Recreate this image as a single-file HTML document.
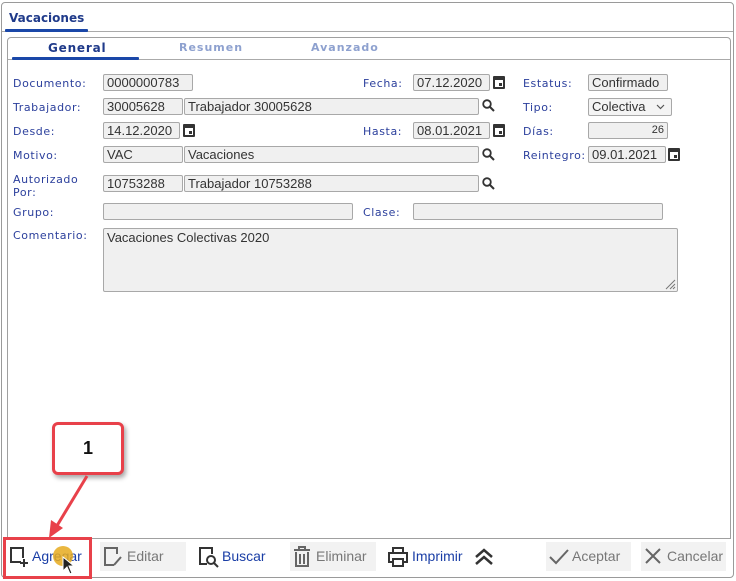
<!DOCTYPE html>
<html><head><meta charset="utf-8"><style>
*{box-sizing:border-box;margin:0;padding:0}
body{width:736px;height:581px;background:#fff;position:relative;overflow:hidden;font-family:"DejaVu Sans","Liberation Sans",sans-serif}
.a{position:absolute}
.lbl{position:absolute;font-size:11px;color:#2b3f9c;letter-spacing:.6px;line-height:13px}
.inp{position:absolute;height:17px;background:#f0f0f0;border:1px solid #a8a8a8;border-radius:2px;font-size:13px;color:#333;line-height:15px;padding-left:3px;white-space:nowrap;overflow:hidden;font-family:"Liberation Sans","DejaVu Sans",sans-serif}
.cal{position:absolute;width:12px;height:13px;border:2px solid #333;border-top-width:4px;border-radius:1px}
.cal:after{content:"";position:absolute;right:1px;bottom:1px;width:3px;height:3px;background:#333}
.btn{position:absolute;top:542px;height:29px;font-size:14px;line-height:29px;font-family:"Liberation Sans","DejaVu Sans",sans-serif}
.gray{background:#f2f2f2;color:#777}
.blue{color:#1a3ea6}
</style></head><body>
<div class="a" style="left:1px;top:2px;width:733px;height:576px;border:1px solid #9a9a9a;border-radius:4px"></div>
<div class="a" style="left:9px;top:11px;font-size:12px;font-weight:bold;color:#1f3a8a">Vacaciones</div>
<div class="a" style="left:2px;top:31px;width:731px;height:1px;background:#aaa"></div>
<div class="a" style="left:5px;top:29px;width:83px;height:3px;background:#1a47a8;border-radius:1px"></div>
<div class="a" style="left:7px;top:37px;width:724px;height:502px;border:1px solid #a0a0a0;border-radius:4px 4px 0 0"></div>
<div class="a" style="left:8px;top:59px;width:722px;height:1px;background:#aaa"></div>
<div class="a" style="left:12px;top:57px;width:127px;height:3px;background:#1a47a8;border-radius:1px"></div>
<div class="a" style="left:48px;top:41px;font-size:12px;font-weight:bold;color:#1f3a8a;letter-spacing:.8px">General</div>
<div class="a" style="left:179px;top:41px;font-size:11px;font-weight:bold;color:#8ea1cf;letter-spacing:1px">Resumen</div>
<div class="a" style="left:311px;top:41px;font-size:11px;font-weight:bold;color:#8ea1cf;letter-spacing:1px">Avanzado</div>

<div class="lbl" style="left:13px;top:77px">Documento:</div>
<div class="inp" style="left:103px;top:74px;width:90px">0000000783</div>
<div class="lbl" style="left:363px;top:77px">Fecha:</div>
<div class="inp" style="left:413px;top:74px;width:77px">07.12.2020</div><div class="cal" style="left:493px;top:76px"></div>
<div class="lbl" style="left:523px;top:77px">Estatus:</div>
<div class="inp" style="left:588px;top:74px;width:80px">Confirmado</div>

<div class="lbl" style="left:13px;top:101px">Trabajador:</div>
<div class="inp" style="left:103px;top:98px;width:80px">30005628</div>
<div class="inp" style="left:184px;top:98px;width:295px">Trabajador 30005628</div>
<svg class="a" style="left:482px;top:99px" width="13" height="13"><circle cx="5" cy="5" r="3.8" fill="none" stroke="#333" stroke-width="1.8"/><line x1="8" y1="8" x2="12" y2="12" stroke="#333" stroke-width="2"/></svg>
<div class="lbl" style="left:523px;top:101px">Tipo:</div>
<div class="inp" style="left:588px;top:98px;width:84px;height:18px;background:#f4f4f4">Colectiva</div>
<svg class="a" style="left:656px;top:104px" width="9" height="6"><path d="M1 1L4.5 4.5L8 1" fill="none" stroke="#555" stroke-width="1.2"/></svg>

<div class="lbl" style="left:13px;top:125px">Desde:</div>
<div class="inp" style="left:103px;top:122px;width:77px">14.12.2020</div><div class="cal" style="left:183px;top:124px"></div>
<div class="lbl" style="left:363px;top:125px">Hasta:</div>
<div class="inp" style="left:413px;top:122px;width:77px">08.01.2021</div><div class="cal" style="left:493px;top:124px"></div>
<div class="lbl" style="left:523px;top:125px">Días:</div>
<div class="inp" style="left:588px;top:122px;width:80px;text-align:right;padding-right:3px;font-size:11px">26</div>

<div class="lbl" style="left:13px;top:149px">Motivo:</div>
<div class="inp" style="left:103px;top:146px;width:80px">VAC</div>
<div class="inp" style="left:184px;top:146px;width:295px">Vacaciones</div>
<svg class="a" style="left:482px;top:148px" width="13" height="13"><circle cx="5" cy="5" r="3.8" fill="none" stroke="#333" stroke-width="1.8"/><line x1="8" y1="8" x2="12" y2="12" stroke="#333" stroke-width="2"/></svg>
<div class="lbl" style="left:523px;top:149px">Reintegro:</div>
<div class="inp" style="left:588px;top:146px;width:78px">09.01.2021</div><div class="cal" style="left:668px;top:148px"></div>

<div class="lbl" style="left:13px;top:173px">Autorizado<br>Por:</div>
<div class="inp" style="left:103px;top:175px;width:80px">10753288</div>
<div class="inp" style="left:184px;top:175px;width:295px">Trabajador 10753288</div>
<svg class="a" style="left:482px;top:177px" width="13" height="13"><circle cx="5" cy="5" r="3.8" fill="none" stroke="#333" stroke-width="1.8"/><line x1="8" y1="8" x2="12" y2="12" stroke="#333" stroke-width="2"/></svg>

<div class="lbl" style="left:13px;top:206px">Grupo:</div>
<div class="inp" style="left:103px;top:203px;width:250px"></div>
<div class="lbl" style="left:363px;top:206px">Clase:</div>
<div class="inp" style="left:413px;top:203px;width:250px"></div>

<div class="lbl" style="left:13px;top:229px">Comentario:</div>
<div class="inp" style="left:103px;top:228px;width:575px;height:64px;padding-top:1px">Vacaciones Colectivas 2020</div>
<svg class="a" style="left:664px;top:278px" width="12" height="12"><path d="M2 11L11 2M6 11L11 6M9 11L11 9" stroke="#777" stroke-width="1"/></svg>

<svg class="a" style="left:9px;top:546px" width="20" height="22"><path d="M12 16H2V2H14V12" fill="none" stroke="#333" stroke-width="2"/><path d="M15 13V21M11 17H19" stroke="#333" stroke-width="2"/></svg>
<div class="btn blue" style="left:32px">Agregar</div>
<div class="a" style="left:53px;top:546px;width:20px;height:20px;border-radius:50%;background:rgba(230,170,30,.85)"></div>
<svg class="a" style="left:62px;top:556px" width="14" height="20"><path d="M1 1V15L5 11L8 18L10 17L7 10H12Z" fill="#222" stroke="#fff" stroke-width="1"/></svg>
<div class="btn gray" style="left:100px;width:86px"></div>
<svg class="a" style="left:103px;top:546px" width="20" height="22"><path d="M11 19H2V2H14V8" fill="none" stroke="#666" stroke-width="2"/><path d="M11 19L18 11" stroke="#666" stroke-width="2"/></svg>
<div class="btn gray" style="left:127px;background:none">Editar</div>
<svg class="a" style="left:198px;top:546px" width="22" height="22"><path d="M9 18H2V2H14V8" fill="none" stroke="#333" stroke-width="2"/><circle cx="13" cy="14" r="4" fill="none" stroke="#333" stroke-width="2"/><line x1="16" y1="17" x2="20" y2="21" stroke="#333" stroke-width="2"/></svg>
<div class="btn blue" style="left:222px">Buscar</div>
<div class="btn gray" style="left:290px;width:86px"></div>
<svg class="a" style="left:293px;top:546px" width="18" height="22"><path d="M1 4H17M6 4V1H12V4" fill="none" stroke="#666" stroke-width="2"/><path d="M3 6V20H15V6M7 8V18M11 8V18" fill="none" stroke="#666" stroke-width="2"/></svg>
<div class="btn gray" style="left:316px;background:none">Eliminar</div>
<svg class="a" style="left:388px;top:547px" width="20" height="20"><path d="M5 6V1H15V6M5 15H1V6H19V15H15M5 12H15V19H5Z" fill="none" stroke="#333" stroke-width="2"/></svg>
<div class="btn blue" style="left:412px">Imprimir</div>
<svg class="a" style="left:474px;top:548px" width="20" height="18"><path d="M2 9L10 2L18 9M2 16L10 9L18 16" fill="none" stroke="#333" stroke-width="2.5"/></svg>
<div class="btn gray" style="left:546px;width:85px"></div>
<svg class="a" style="left:549px;top:548px" width="20" height="18"><path d="M1 9L7 15L19 2" fill="none" stroke="#666" stroke-width="2"/></svg>
<div class="btn gray" style="left:572px;background:none">Aceptar</div>
<div class="btn gray" style="left:641px;width:85px"></div>
<svg class="a" style="left:645px;top:548px" width="16" height="16"><path d="M1 1L15 15M15 1L1 15" stroke="#666" stroke-width="2"/></svg>
<div class="btn gray" style="left:667px;background:none">Cancelar</div>

<div class="a" style="left:52px;top:422px;width:72px;height:53px;border:3px solid #e8414a;border-radius:6px;background:#fff;box-shadow:2px 3px 5px rgba(0,0,0,.35);text-align:center;line-height:47px;font-family:'Liberation Sans',sans-serif;font-weight:bold;font-size:18px;color:#111">1</div>
<svg class="a" style="left:40px;top:474px" width="60" height="70"><line x1="47" y1="2" x2="15" y2="55" stroke="#e8414a" stroke-width="3"/><path d="M9 64L11 46L23 54Z" fill="#e8414a"/></svg>
<div class="a" style="left:3px;top:537px;width:89px;height:42px;border:3px solid #e8414a"></div>
</body></html>
